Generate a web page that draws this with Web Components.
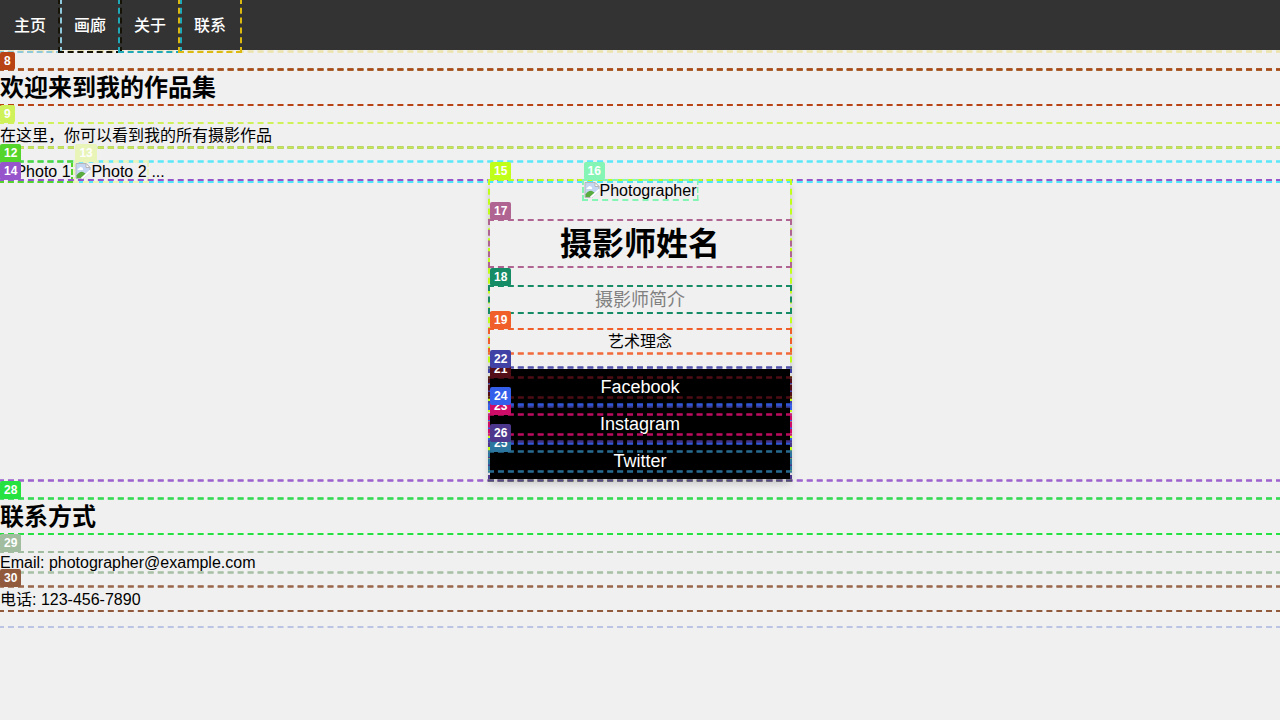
<!DOCTYPE html>
<html lang="zh-CN">
<head>
<meta charset="utf-8">
<title>摄影作品集</title>
<style>
html,body{margin:0;height:100%;background:#f0f0f0;overflow:hidden}
body{font:16px/normal "Liberation Sans","Noto Sans CJK SC",sans-serif;color:#000}
</style>
</head>
<body>
<portfolio-page></portfolio-page>
<script>
// A box with a dashed outline and an optional numbered tag above its top-left corner.
// soft="t", "b" or "tb" draws that edge three rows deep, with lighter outer rows.
class MarkBox extends HTMLElement{
  connectedCallback(){
    const r=this.attachShadow({mode:"open"});
    const tag=this.getAttribute("tag");
    const soft=this.getAttribute("soft")||"";
    const t=soft.includes("t"),b=soft.includes("b");
    r.innerHTML=`<style>
      :host{display:block;position:relative;box-sizing:border-box}
      i{position:absolute;pointer-events:none;left:0;right:0;outline:2px dashed var(--c)}
      .frame{top:0;bottom:0;clip-path:inset(${t?"0px":"-2px"} -2px ${b?"0px":"-2px"} -2px)}
      .t1,.t2,.b1,.b2{height:8px;opacity:.7}
      .t1,.t2{clip-path:inset(-2px -2px 8px -2px)}
      .b1,.b2{clip-path:inset(8px -2px -2px -2px)}
      .t1{top:-1px}.t2{top:0}.b1{bottom:0}.b2{bottom:-1px}
      .tag{position:absolute;left:0;top:${t?"-19.5px":"-19px"};box-sizing:border-box;height:18px;padding:2px 4px;background:var(--c);color:#fff;
        font:bold 12px/14px "Liberation Sans",sans-serif;border-radius:2px;text-align:left;z-index:var(--z,2)}
    </style><i class="frame"></i>${t?'<i class="t1"></i><i class="t2"></i>':""}${b?'<i class="b1"></i><i class="b2"></i>':""}<slot></slot>${tag?`<span class="tag">${tag}</span>`:""}`;
  }
}
customElements.define("mark-box",MarkBox);

// Missing-picture placeholder followed by its alternative text.
class MissingPhoto extends HTMLElement{
  connectedCallback(){
    this.attachShadow({mode:"open"}).innerHTML=`<style>
      :host{display:flex;height:18px;line-height:18px}
      svg{display:block;width:16px;height:16px;flex:none;margin-right:var(--gap,0)}
    </style><svg viewBox="0 0 16 16"><path d="M1 .5h10l4 4v11H1z" fill="#c5d6f3" stroke="#b4b6ba"/>
    <path d="M2.500 7q0-1.800 1.700-1.800q.8-1.700 2.300-.9q1.700.2 1.700 2.700z" fill="#fff"/>
    <path d="M1.500 15v-2.500q3-4.500 6.500-3.500l3 2l-4 4z" fill="#58ab3e"/><path d="M8 16l8-7.500V16z" fill="#f0f0f0"/><path d="M6.500 15.500L15.500 7.500" stroke="#fff" stroke-width="1.800"/>
    <path d="M11 .5v4h4z" fill="#fff" stroke="#b4b6ba"/></svg><slot></slot>`;
  }
}
customElements.define("missing-photo",MissingPhoto);

class SiteNav extends HTMLElement{
  connectedCallback(){
    this.attachShadow({mode:"open"}).innerHTML=`<style>
      :host{display:flex;height:50px;background:#333;color:#fff;font-weight:500}
      mark-box{width:60px;height:51px;flex:none;text-align:center;line-height:51px}
    </style>
    <mark-box style="--c:#8fc9dc">主页</mark-box><mark-box style="--c:#161206">画廊</mark-box>
    <mark-box style="--c:#1fa9b8">关于</mark-box><mark-box style="--c:#dcb911">联系</mark-box>`;
  }
}
customElements.define("site-nav",SiteNav);

class ProfileCard extends HTMLElement{
  connectedCallback(){
    this.attachShadow({mode:"open"}).innerHTML=`<style>
      :host{display:block;text-align:center}
      .card{width:300px;height:298px;margin:0 auto;box-shadow:0 4px 8px rgba(0,0,0,.2);background:linear-gradient(#000,#000) 0 188px/100% 110px no-repeat}
      .photo{width:113px;height:18px;margin:0 auto 22px}
      .photo missing-photo{padding-top:1px}
      .name{height:45px;font-size:32px;font-weight:bold;line-height:47px;margin-bottom:21px}
      .intro{height:25px;font-size:18px;line-height:26px;color:grey;margin-bottom:18px}
      .idea{height:22px;line-height:23px;margin-bottom:17px}
      .link{height:36px;padding-top:10px;margin-bottom:1px;color:#fff;font-size:18px;--z:3}
      .link:last-child{margin-bottom:0}
      .link mark-box{height:17px;line-height:17px;--z:1}
    </style>
    <mark-box class="card" style="--c:#bfff1a" tag="15" soft="b">
      <mark-box class="photo" style="--c:#85f5b5" tag="16"><missing-photo>Photographer</missing-photo></mark-box>
      <mark-box class="name" style="--c:#b06492" tag="17">摄影师姓名</mark-box>
      <mark-box class="intro" style="--c:#168c66" tag="18">摄影师简介</mark-box>
      <mark-box class="idea" style="--c:#f05e2a" tag="19" soft="b">艺术理念</mark-box>
      <mark-box class="link" style="--c:#4142a5" tag="22" soft="tb"><mark-box style="--c:#540e17" tag="21" soft="tb">Facebook</mark-box></mark-box>
      <mark-box class="link" style="--c:#345feb" tag="24" soft="tb"><mark-box style="--c:#cd0d68" tag="23" soft="tb">Instagram</mark-box></mark-box>
      <mark-box class="link" style="--c:#4c378d" tag="26" soft="tb"><mark-box style="--c:#2c759e" tag="25" soft="tb">Twitter</mark-box></mark-box>
    </mark-box>`;
  }
}
customElements.define("profile-card",ProfileCard);

class PortfolioPage extends HTMLElement{
  connectedCallback(){
    this.attachShadow({mode:"open"}).innerHTML=`<style>
      :host{display:block}
      .nav{height:50px}
      .welcome{margin-top:21px;height:75px}
      .h{font-size:24px;font-weight:bold;line-height:34px;height:33px}
      .gallery{margin-top:17px;height:18px;display:flex;line-height:18px;white-space:pre}
      .gallery .a{width:71px;height:18px;margin-right:4.450px;--gap:-.6px}
      .gallery .b{width:71.500px;height:18px}
      .about{height:298px}
      .contact{margin-top:21px;height:126px}
    </style>
    <mark-box class="nav" style="--c:#ede3a6" soft="b"><site-nav></site-nav></mark-box>
    <mark-box class="welcome" style="--c:#5f7f30" soft="tb">
      <mark-box class="h" style="--c:#b84314" tag="8" soft="t">欢迎来到我的作品集</mark-box>
      <mark-box style="--c:#cff25a;margin-top:20px;height:22px;line-height:23px" tag="9" soft="b">在这里，你可以看到我的所有摄影作品</mark-box>
    </mark-box>
    <mark-box class="gallery" style="--c:#4ee7fa" soft="t">
      <mark-box class="a" style="--c:#55d42c" tag="12" soft="t"><missing-photo>Photo 1</missing-photo></mark-box>
      <mark-box class="b" style="--c:#e8f4b8" tag="13" soft="t"><missing-photo>Photo 2</missing-photo></mark-box><span> ...</span>
    </mark-box>
    <mark-box class="about" style="--c:#9755cc" tag="14" soft="b"><profile-card></profile-card></mark-box>
    <mark-box class="contact" style="--c:#bcc4e4" soft="t">
      <mark-box class="h" style="--c:#26e240" tag="28" soft="t">联系方式</mark-box>
      <mark-box style="--c:#a1bc9f;margin-top:20px;height:18px;line-height:19px" tag="29" soft="b">Email: photographer@example.com</mark-box>
      <mark-box style="--c:#925a3c;margin-top:17px;height:22px;line-height:23px" tag="30" soft="t">电话: 123-456-7890</mark-box>
    </mark-box>`;
  }
}
customElements.define("portfolio-page",PortfolioPage);
</script>
</body>
</html>
